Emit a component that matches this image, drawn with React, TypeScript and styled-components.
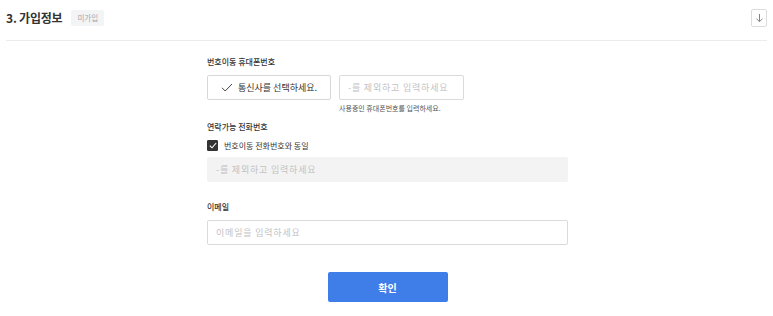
import React, { useState } from 'react'
import styled, { createGlobalStyle } from 'styled-components'

const GlobalStyle = createGlobalStyle`
  html, body {
    margin: 0;
    padding: 0;
    background: #ffffff;
  }
  body {
    font-family: 'Noto Sans CJK KR', 'Noto Sans', sans-serif;
    color: #333333;
  }
  * {
    box-sizing: border-box;
  }
`

const App = () => {
  const [same, setSame] = useState(true)

  return (
    <>
      <GlobalStyle />
      <Page>
        <SectionHeader>
          <TitleRow>
            <SectionTitle>3. 가입정보</SectionTitle>
            <StatusBadge>미가입</StatusBadge>
          </TitleRow>
          <ToggleButton aria-label="펼치기">
            <svg width="9" height="10" viewBox="0 0 9 10" fill="none">
              <path d="M4.5 1v7.5M1.5 5.8l3 2.8 3-2.8" stroke="#777" strokeWidth="0.9" />
            </svg>
          </ToggleButton>
        </SectionHeader>

        <Form>
          <Field>
            <FieldLabel>번호이동 휴대폰번호</FieldLabel>
            <PhoneRow>
              <CarrierButton>
                <svg width="12" height="9" viewBox="0 0 12 9" fill="none">
                  <path d="M1 4.8l3.2 3.2L11 1" stroke="#444" strokeWidth="1" />
                </svg>
                통신사를 선택하세요.
              </CarrierButton>
              <PhoneColumn>
                <TextInput $width="125px" placeholder="-를 제외하고 입력하세요" />
                <HelperText>사용중인 휴대폰번호를 입력하세요.</HelperText>
              </PhoneColumn>
            </PhoneRow>
          </Field>

          <Field $top="8px">
            <FieldLabel>연락가능 전화번호</FieldLabel>
            <CheckRow onClick={() => setSame(!same)}>
              <CheckBox $checked={same}>
                {same && (
                  <svg width="8" height="7" viewBox="0 0 8 7" fill="none">
                    <path d="M0.8 3.6l2.2 2.2L7.2 1" stroke="#fff" strokeWidth="1.1" />
                  </svg>
                )}
              </CheckBox>
              <CheckLabel>번호이동 전화번호와 동일</CheckLabel>
            </CheckRow>
            <TextInput $width="361px" disabled={same} placeholder="-를 제외하고 입력하세요" />
          </Field>

          <Field $top="19px">
            <FieldLabel>이메일</FieldLabel>
            <TextInput $width="361px" placeholder="이메일을 입력하세요" />
          </Field>

          <SubmitRow>
            <SubmitButton>확인</SubmitButton>
          </SubmitRow>
        </Form>
      </Page>
    </>
  )
}

export default App

const Page = styled.div`
  width: 773px;
  height: 316px;
  padding: 0 6px;
  background: #ffffff;
`

const SectionHeader = styled.div`
  display: flex;
  align-items: center;
  justify-content: space-between;
  height: 41px;
  padding-bottom: 5px;
  border-bottom: 1px solid #ececec;
`

const TitleRow = styled.div`
  display: flex;
  align-items: center;
  gap: 9px;
`

const SectionTitle = styled.h2`
  margin: 0;
  font-size: 12px;
  font-weight: 700;
  color: #333333;
  letter-spacing: -0.2px;
`

const StatusBadge = styled.span`
  display: inline-flex;
  align-items: center;
  height: 16px;
  padding: 0 6px;
  border-radius: 2px;
  background: #f3f4f6;
  color: #a3a7ad;
  font-size: 7.5px;
`

const ToggleButton = styled.button`
  display: flex;
  align-items: center;
  justify-content: center;
  width: 16px;
  height: 18px;
  padding: 0;
  background: #ffffff;
  border: 1px solid #dcdcdc;
  border-radius: 2px;
  cursor: pointer;
`

const Form = styled.div`
  display: flex;
  flex-direction: column;
  width: 361px;
  margin: 15px 0 0 201px;
`

const Field = styled.div<{ $top?: string }>`
  display: flex;
  flex-direction: column;
  margin-top: ${(p) => p.$top || '0'};
`

const FieldLabel = styled.label`
  font-size: 8px;
  font-weight: 500;
  color: #333333;
  line-height: 11px;
  margin-bottom: 8px;
`

const PhoneRow = styled.div`
  display: flex;
  gap: 8px;
`

const PhoneColumn = styled.div`
  display: flex;
  flex-direction: column;
  gap: 4px;
`

const CarrierButton = styled.button`
  display: flex;
  align-items: center;
  justify-content: center;
  gap: 5px;
  width: 124px;
  height: 25px;
  padding: 0;
  background: #ffffff;
  border: 1px solid #d8d8d8;
  border-radius: 2px;
  font-family: inherit;
  font-size: 9px;
  color: #333333;
  cursor: pointer;
`

const TextInput = styled.input<{ $width: string }>`
  width: ${(p) => p.$width};
  height: 25px;
  padding: 0 8px;
  background: #ffffff;
  border: 1px solid #dadada;
  border-radius: 2px;
  font-family: inherit;
  font-size: 9px;
  letter-spacing: 0.8px;
  color: #333333;
  outline: none;

  &::placeholder {
    color: #c2c2c2;
  }

  &:disabled {
    background: #f3f3f3;
    border-color: #f3f3f3;
  }
`

const HelperText = styled.span`
  font-size: 7px;
  color: #555555;
  line-height: 9px;
`

const CheckRow = styled.div`
  display: flex;
  align-items: center;
  gap: 6px;
  height: 11px;
  margin-bottom: 6px;
  cursor: pointer;
`

const CheckBox = styled.span<{ $checked: boolean }>`
  display: flex;
  align-items: center;
  justify-content: center;
  width: 11px;
  height: 11px;
  border-radius: 1px;
  background: ${(p) => (p.$checked ? '#333333' : '#ffffff')};
  border: 1px solid ${(p) => (p.$checked ? '#333333' : '#cccccc')};
`

const CheckLabel = styled.span`
  font-size: 8px;
  line-height: 11px;
  color: #333333;
`

const SubmitRow = styled.div`
  display: flex;
  justify-content: center;
  margin-top: 27px;
`

const SubmitButton = styled.button`
  width: 120px;
  height: 30px;
  border: none;
  border-radius: 2px;
  background: #3f7ee8;
  color: #ffffff;
  font-family: inherit;
  font-size: 10px;
  font-weight: 700;
  cursor: pointer;
`
